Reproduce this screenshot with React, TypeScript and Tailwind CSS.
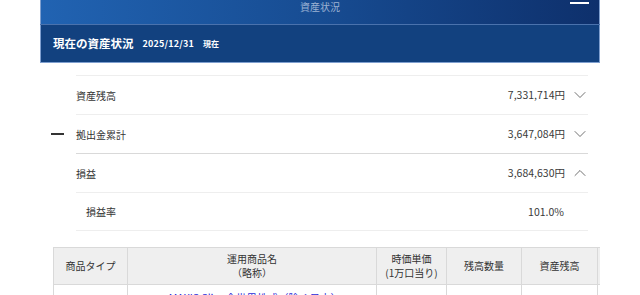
import { ChevronDown, ChevronUp } from 'lucide-react';

const ROWS = [
  { label: '資産残高', value: '7,331,714円', icon: 'down', dash: false },
  { label: '拠出金累計', value: '3,647,084円', icon: 'down', dash: true },
  { label: '損益', value: '3,684,630円', icon: 'up', dash: false },
  { label: '損益率', value: '101.0%', icon: null, dash: false },
];

const COLUMNS = [
  { w: 'w-[74px]', lines: ['商品タイプ'] },
  { w: 'w-[249px]', lines: ['運用商品名', '（略称）'] },
  { w: 'w-[70px]', lines: ['時価単価', '(1万口当り)'] },
  { w: 'w-[75px]', lines: ['残高数量'] },
  { w: 'w-[76px]', lines: ['資産残高'] },
  { w: 'w-[80px]', lines: [] },
];

export default function App() {
  return (
    <div className="h-[295px] w-[640px] overflow-hidden bg-white font-['Noto_Sans_CJK_JP',sans-serif] text-[#333]">
      <div className="mx-auto w-[560px]">
        {/* top bar */}
        <div className="relative h-[24px] border-x border-[#7f9fcf] bg-gradient-to-r from-[#2163b2] via-[#174c92] to-[#0e306c]">
          <div className="pt-px text-center text-[10px] leading-[11px] text-[#9cb2d3]">資産状況</div>
          <span className="absolute right-[10px] top-[2px] h-[2px] w-[19px] bg-white" />
        </div>
        <div className="h-px bg-[#4a72ad]" />
        <div className="flex h-[38px] items-center gap-[9px] border-x border-b border-[#7f9fcf] bg-[#12417f] pl-[12px] pt-[1px] text-white">
          <span className="text-[11.5px] font-bold">現在の資産状況</span>
          <span className="text-[9px] font-bold tracking-[0.2px]">2025/12/31</span>
          <span className="text-[8px] font-bold">現在</span>
        </div>

        {/* summary rows */}
        <div className="pt-[12px]">
          {ROWS.map((r, i) => (
            <div key={r.label} className="flex">
              <div className="flex w-[36px] items-center pl-[11px]">
                {r.dash && <span className="h-[2px] w-[13px] bg-[#333]" />}
              </div>
              <div
                className={`mr-[12px] flex h-[39px] flex-1 items-center border-t ${
                  i === 2 ? 'border-[#d9d9d9]' : 'border-[#eeeeee]'
                } ${i === 3 ? 'border-b pl-[10px] pr-[24px]' : ''}`}
              >
                <span className="text-[10px]">{r.label}</span>
                <span className="ml-auto text-[10.5px] text-[#3a3a3a]">{r.value}</span>
                {r.icon === 'down' && <ChevronDown className="-mr-[2px] ml-[5px] h-[20px] w-[20px] text-[#555]" strokeWidth={1} />}
                {r.icon === 'up' && <ChevronUp className="-mr-[2px] ml-[5px] h-[20px] w-[20px] text-[#555]" strokeWidth={1} />}
              </div>
            </div>
          ))}
        </div>

        {/* holdings table */}
        <div className="ml-[13px] mt-[16px] overflow-hidden">
          <div className="flex w-max border-t border-[#d9d9d9]">
            {COLUMNS.map((c, i) => (
              <div
                key={i}
                className={`${c.w} flex h-[37px] shrink-0 flex-col items-center justify-center border-b border-l border-[#d9d9d9] bg-[#efefef] text-[10px] leading-[14px]`}
              >
                {c.lines.map((l) => (
                  <span key={l}>{l}</span>
                ))}
              </div>
            ))}
          </div>
          <div className="flex w-max">
            {COLUMNS.map((c, i) => (
              <div key={i} className={`${c.w} h-[40px] shrink-0 border-l border-[#d9d9d9] pt-[5px] text-center text-[10.5px]`}>
                {i === 1 && <span className="text-[#2b2bd8]">eMAXIS Slim 全世界株式（除く日本）</span>}
              </div>
            ))}
          </div>
        </div>
      </div>
    </div>
  );
}
